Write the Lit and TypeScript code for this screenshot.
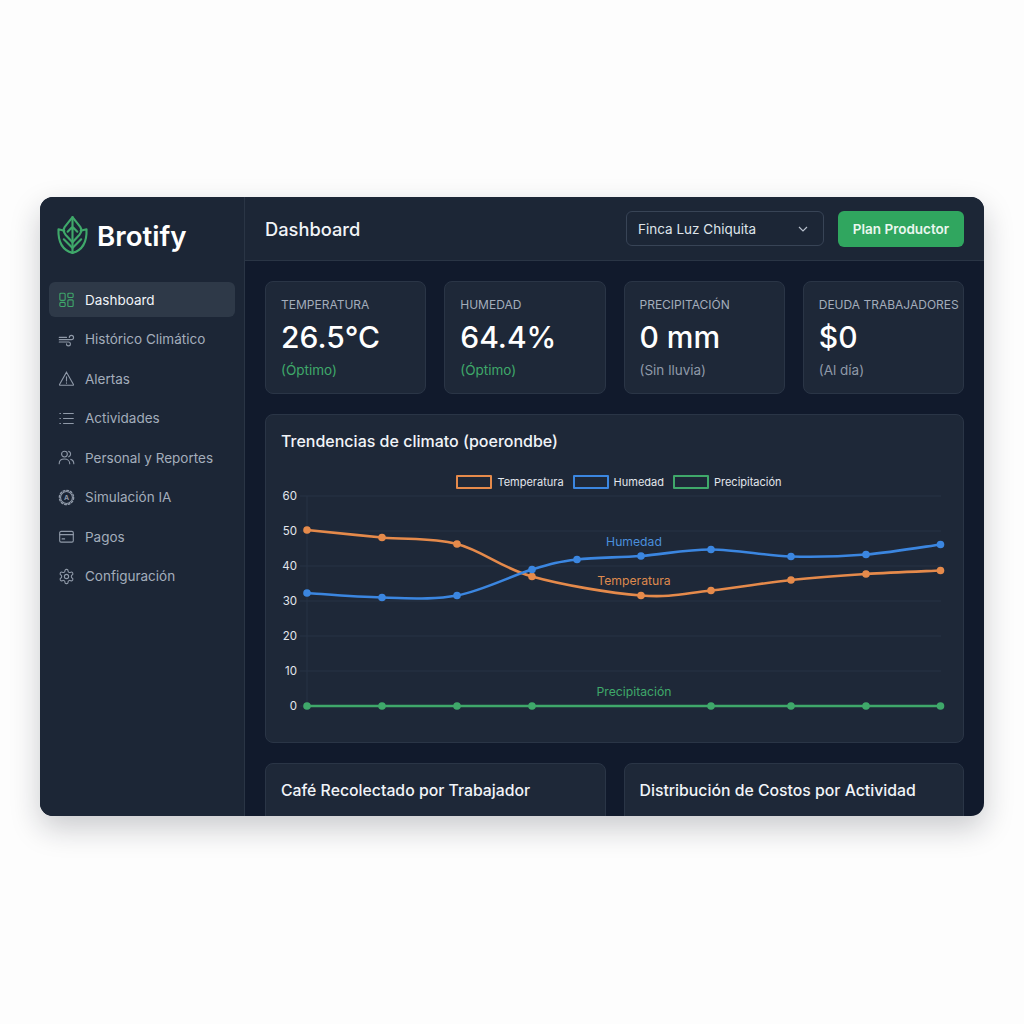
import { LitElement, css, html, svg } from 'lit'
import { customElement } from 'lit/decorators.js'

type Pt = [number, number]

const navItems: { label: string; icon: ReturnType<typeof svg>; active?: boolean }[] = [
  {
    label: 'Dashboard',
    active: true,
    icon: svg`<rect x="2.2" y="2.6" width="6.2" height="8.4" rx="1.2"/><rect x="11.6" y="2.6" width="6.2" height="5" rx="1.2"/><rect x="2.2" y="13.4" width="6.2" height="4.8" rx="1.2"/><rect x="11.6" y="10.4" width="6.2" height="7.8" rx="1.2"/>`,
  },
  {
    label: 'Histórico Climático',
    icon: svg`<path d="M1.5 7.5h8.500M1.500 10.200h14.300a2.500 2.500 0 1 0-2.500-2.500M1.500 12.900h10.800a2.300 2.300 0 1 1-2.300 2.300"/>`,
  },
  {
    label: 'Alertas',
    icon: svg`<path d="M10 2.6 18.2 17a.7.7 0 0 1-.6 1H2.4a.7.7 0 0 1-.6-1L10 2.6Z"/><path d="M10 8v5M10 15v.6"/>`,
  },
  {
    label: 'Actividades',
    icon: svg`<path d="M6.5 4.2h11.5M6.5 10h11.5M6.5 15.8h11.5M2.2 4.2h.7M2.2 10h.7M2.2 15.8h.7"/>`,
  },
  {
    label: 'Personal y Reportes',
    icon: svg`<circle cx="7.6" cy="6" r="3.4"/><path d="M1.4 17.4c0-3.4 2.6-5.6 6.2-5.6s6.2 2.2 6.2 5.6"/><path d="M12.6 2.8a3.4 3.4 0 0 1 0 6.4M15 12.2c2.2.7 3.6 2.6 3.6 5.2"/>`,
  },
  {
    label: 'Simulación IA',
    icon: svg`<circle cx="10" cy="10" r="7"/><circle cx="10" cy="10" r="8.4" stroke-width="1.6" stroke-dasharray="2.2 2.2"/><text x="10" y="12.800" text-anchor="middle" class="glyph">A</text>`,
  },
  {
    label: 'Pagos',
    icon: svg`<rect x="2" y="4" width="16" height="12.6" rx="1.6"/><path d="M2 7.8h16M4.8 12.8h3"/>`,
  },
  {
    label: 'Configuración',
    icon: svg`<g transform="scale(.833)" stroke-width="1.55"><path d="M12.22 2h-.44a2 2 0 0 0-2 2v.18a2 2 0 0 1-1 1.73l-.43.25a2 2 0 0 1-2 0l-.15-.08a2 2 0 0 0-2.73.73l-.22.38a2 2 0 0 0 .73 2.73l.15.1a2 2 0 0 1 1 1.72v.51a2 2 0 0 1-1 1.74l-.15.09a2 2 0 0 0-.73 2.73l.22.38a2 2 0 0 0 2.73.73l.15-.08a2 2 0 0 1 2 0l.43.25a2 2 0 0 1 1 1.73V20a2 2 0 0 0 2 2h.44a2 2 0 0 0 2-2v-.18a2 2 0 0 1 1-1.73l.43-.25a2 2 0 0 1 2 0l.15.08a2 2 0 0 0 2.73-.73l.22-.39a2 2 0 0 0-.73-2.73l-.15-.08a2 2 0 0 1-1-1.74v-.5a2 2 0 0 1 1-1.74l.15-.09a2 2 0 0 0 .73-2.73l-.22-.38a2 2 0 0 0-2.73-.73l-.15.08a2 2 0 0 1-2 0l-.43-.25a2 2 0 0 1-1-1.73V4a2 2 0 0 0-2-2z"/><circle cx="12" cy="12" r="3"/></g>`,
  },
]

const stats = [
  { label: 'TEMPERATURA', value: '26.5°C', note: '(Óptimo)', good: true },
  { label: 'HUMEDAD', value: '64.4%', note: '(Óptimo)', good: true },
  { label: 'PRECIPITACIÓN', value: '0 mm', note: '(Sin lluvia)', good: false },
  { label: 'DEUDA TRABAJADORES', value: '$0', note: '(Al día)', good: false },
]

// chart points are in the chart's own 0-698 x 0-240 space
const temperature: Pt[] = [[41, 42], [116, 49.5], [191, 56], [266, 88.5], [375, 107.5], [445, 102.5], [525, 92], [600, 86], [674.5, 82.5]]
const humidity: Pt[] = [[41, 105], [116, 109.5], [191, 107.5], [266, 81.5], [311, 71.5], [375, 68], [445, 61.5], [525, 68.5], [600, 66.5], [674.5, 56.5]]
const rain: Pt[] = [[41, 218], [116, 218], [191, 218], [266, 218], [445, 218], [525, 218], [600, 218], [674.5, 218]]
const ticks: [string, number][] = [['60', 8], ['50', 43], ['40', 78], ['30', 113], ['20', 148], ['10', 183], ['0', 218]]

// Catmull-Rom through the points, same look as a chart.js tension curve
function curve(p: Pt[]) {
  let d = `M${p[0][0]} ${p[0][1]}`
  for (let i = 0; i < p.length - 1; i++) {
    const a = p[Math.max(i - 1, 0)]
    const b = p[i]
    const c = p[i + 1]
    const e = p[Math.min(i + 2, p.length - 1)]
    const k = 0.17
    d += ` C${b[0] + (c[0] - a[0]) * k} ${b[1] + (c[1] - a[1]) * k} ${c[0] - (e[0] - b[0]) * k} ${c[1] - (e[1] - b[1]) * k} ${c[0]} ${c[1]}`
  }
  return d
}

@customElement('app-root')
export class AppRoot extends LitElement {
  static styles = css`
    :host {
      display: block;
      height: 1024px;
      box-sizing: border-box;
      padding: 197px 40px 208px;
      background: #fdfdfd;
      font-family: Inter, 'Liberation Sans', sans-serif;
      color: #f1f4f8;
    }

    .window {
      display: flex;
      height: 619px;
      border-radius: 13px;
      overflow: hidden;
      background: #111a2c;
      box-shadow: 0 12px 30px rgba(20, 25, 35, 0.22);
    }

    .sidebar {
      width: 205px;
      flex: none;
      box-sizing: border-box;
      padding: 0 9px;
      background: #1c2636;
      border-right: 1px solid #2a3545;
    }

    .brand {
      display: flex;
      align-items: center;
      gap: 10px;
      height: 77px;
      margin-bottom: 8px;
      padding-left: 9px;
      font-size: 27.7px;
      font-weight: 600;
      color: #fff;
    }

    .brand svg {
      width: 29px;
      height: 39px;
      overflow: visible;
      fill: none;
      stroke: #3fa86a;
      stroke-width: 2.2;
      stroke-linejoin: round;
      stroke-linecap: round;
    }

    nav {
      display: flex;
      flex-direction: column;
      gap: 4.5px;
    }

    .item {
      display: flex;
      align-items: center;
      gap: 10px;
      height: 35px;
      padding-left: 9px;
      border-radius: 6px;
      font-size: 13.5px;
      color: #a3adbb;
    }

    .item.active {
      background: #2e3948;
      color: #f1f4f8;
    }

    .item svg {
      width: 17px;
      height: 17px;
      flex: none;
      fill: none;
      stroke: #8f99a8;
      stroke-width: 1.3;
      stroke-linecap: round;
    }

    .item.active svg {
      stroke: #3fa86a;
    }

    .glyph {
      font: 700 8px Inter, 'Liberation Sans', sans-serif;
      fill: #8f99a8;
      stroke: none;
    }

    main {
      flex: 1;
      min-width: 0;
      display: flex;
      flex-direction: column;
    }

    header {
      display: flex;
      align-items: center;
      height: 64px;
      flex: none;
      box-sizing: border-box;
      padding: 0 20px;
      background: #1c2636;
      border-bottom: 1px solid #2a3545;
    }

    h1 {
      flex: 1;
      margin: 0;
      font-size: 18.300px;
      font-weight: 500;
    }

    .select {
      display: flex;
      align-items: center;
      justify-content: space-between;
      box-sizing: border-box;
      width: 198px;
      height: 35px;
      padding: 0 15px 0 11px;
      margin-right: 14px;
      border: 1px solid #384456;
      border-radius: 6px;
      font-size: 13.5px;
      color: #dfe4ea;
    }

    .select svg {
      width: 10px;
      height: 6px;
      fill: none;
      stroke: #b6becb;
      stroke-width: 1.2;
    }

    .plan {
      width: 126px;
      height: 36px;
      border: none;
      border-radius: 6px;
      background: #30a65f;
      color: #eaf7ef;
      font: 600 13.5px Inter, 'Liberation Sans', sans-serif;
    }

    .content {
      flex: 1;
      min-height: 0;
      display: flex;
      flex-direction: column;
      gap: 20px;
      padding: 20px 20px 0;
    }

    .card {
      box-sizing: border-box;
      background: #1e2838;
      border: 1px solid #2a3546;
      border-radius: 8px;
    }

    .stats {
      display: grid;
      grid-template-columns: repeat(4, 1fr);
      gap: 18px;
    }

    .stat {
      height: 113px;
      padding: 15px 0 0 15px;
      white-space: nowrap;
      overflow: hidden;
    }

    .stat .label {
      font-size: 12px;
      line-height: 16px;
      color: #a3adbb;
    }

    .stat .value {
      margin-top: 6px;
      font-size: 30px;
      line-height: 36px;
      font-weight: 550;
      color: #fff;
    }

    .stat .note {
      margin-top: 6px;
      font-size: 13.5px;
      line-height: 18px;
      color: #8f99a8;
    }

    .stat .note.good {
      color: #3fa86a;
    }

    .trend {
      height: 329px;
      flex: none;
      padding: 16px 0 0 15px;
    }

    h2 {
      margin: 0;
      font-size: 16px;
      line-height: 21px;
      font-weight: 500;
      color: #f1f4f8;
    }

    .legend {
      display: flex;
      justify-content: center;
      align-items: center;
      height: 16px;
      margin: 22px 0 0 -15px;
      font-size: 11px;
      color: #e2e6ec;
    }

    .legend i {
      width: 32px;
      height: 10px;
      margin: 0 5px 0 9px;
      border: 2px solid;
      border-radius: 1px;
    }

    .legend span {
      display: flex;
      align-items: center;
    }

    .chart {
      display: block;
      width: 698px;
      height: 240px;
      margin: -2.5px 0 0 -15px;
      overflow: visible;
    }

    .chart text {
      font: 11.5px Inter, 'Liberation Sans', sans-serif;
    }

    .chart text.tag {
      font-size: 12.2px;
    }

    .lower {
      display: grid;
      grid-template-columns: 1fr 1fr;
      gap: 18px;
      flex: 1;
    }

    .lower .card {
      height: 100px;
      padding: 16px 0 0 15px;
    }

    .lower h2 {
      font-size: 15.8px;
    }
  `

  private series(points: Pt[], color: string) {
    return svg`
      <path d=${curve(points)} fill="none" stroke=${color} stroke-width="2.6"/>
      ${points.map(([x, y]) => svg`<circle cx=${x} cy=${y} r="3.8" fill=${color}/>`)}
    `
  }

  private chart() {
    return html`
      <svg class="chart" viewBox="0 0 698 240">
        <path d="M41 8V218" stroke="#273244" fill="none"/>
        ${ticks.map(([label, y]) => svg`
          <line x1="34" x2="675" y1=${y} y2=${y} stroke="#273244"/>
          <text x="31" y=${y + 4} text-anchor="end" fill="#e2e6ec">${label}</text>
        `)}
        ${this.series(rain, '#3fa86a')}
        ${this.series(temperature, '#e58a4b')}
        ${this.series(humidity, '#3b86e0')}
        <text class="tag" x="368" y="58" text-anchor="middle" fill="#4a8fdc">Humedad</text>
        <text class="tag" x="368" y="97" text-anchor="middle" fill="#df8a4e">Temperatura</text>
        <text class="tag" x="368" y="208" text-anchor="middle" fill="#3fa86a">Precipitación</text>
      </svg>
    `
  }

  render() {
    return html`
      <div class="window">
        <aside class="sidebar">
          <div class="brand">
            <svg viewBox="0 0 30 40">
              <path d="M15 1 23 11C25 14 24 17 22 19.500L15 27 8 19.500C6 17 5 14 7 11L15 1Z"/>
              <path d="M15 1V38M15 11 20 16M15 11 10 16"/>
              <path d="M23.500 15 29.500 13.500C30 26 26 35 15 38 4 35 0 26 .5 13.500L6.500 15"/>
              <path d="M15 33 24 24M15 33 6 24"/>
            </svg>
            Brotify
          </div>
          <nav>
            ${navItems.map(
              (n) => html`
                <div class="item ${n.active ? 'active' : ''}">
                  <svg viewBox="0 0 20 20">${n.icon}</svg>
                  ${n.label}
                </div>
              `
            )}
          </nav>
        </aside>
        <main>
          <header>
            <h1>Dashboard</h1>
            <div class="select">
              Finca Luz Chiquita
              <svg viewBox="0 0 10 6"><path d="M1 1l4 4 4-4"/></svg>
            </div>
            <button class="plan">Plan Productor</button>
          </header>
          <div class="content">
            <section class="stats">
              ${stats.map(
                (s) => html`
                  <div class="card stat">
                    <div class="label">${s.label}</div>
                    <div class="value">${s.value}</div>
                    <div class="note ${s.good ? 'good' : ''}">${s.note}</div>
                  </div>
                `
              )}
            </section>
            <section class="card trend">
              <h2>Trendencias de climato (poerondbe)</h2>
              <div class="legend">
                <span><i style="border-color:#e58a4b"></i>Temperatura</span>
                <span><i style="border-color:#3b86e0"></i>Humedad</span>
                <span><i style="border-color:#3fa86a"></i>Precipitación</span>
              </div>
              ${this.chart()}
            </section>
            <section class="lower">
              <div class="card"><h2>Café Recolectado por Trabajador</h2></div>
              <div class="card"><h2>Distribución de Costos por Actividad</h2></div>
            </section>
          </div>
        </main>
      </div>
    `
  }
}
